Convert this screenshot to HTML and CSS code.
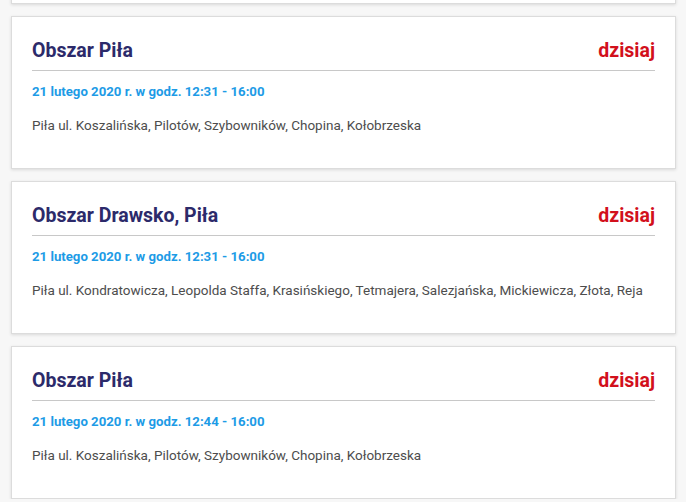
FILE: index.html
```html
<!DOCTYPE html>
<html lang="pl">
<head>
  <meta charset="UTF-8" />
  <meta name="viewport" content="width=device-width, initial-scale=1.0"/>
  <title>Wyłączenia</title>
  <link rel="stylesheet" href="styles.css">
</head>
<body>
  <div class="outages">
    <!-- poprzedni wpis, widoczny tylko dół karty -->
    <div class="outage"></div>

    <div class="outage">
      <div class="outage-head">
        <h2 class="outage-area">Obszar Piła</h2>
        <span class="outage-when">dzisiaj</span>
      </div>
      <div class="outage-date">21 lutego 2020 r. w godz. 12:31 - 16:00</div>
      <div class="outage-streets">Piła ul. Koszalińska, Pilotów, Szybowników, Chopina, Kołobrzeska</div>
    </div>

    <div class="outage">
      <div class="outage-head">
        <h2 class="outage-area">Obszar Drawsko, Piła</h2>
        <span class="outage-when">dzisiaj</span>
      </div>
      <div class="outage-date">21 lutego 2020 r. w godz. 12:31 - 16:00</div>
      <div class="outage-streets">Piła ul. Kondratowicza, Leopolda Staffa, Krasińskiego, Tetmajera, Salezjańska, Mickiewicza, Złota, Reja</div>
    </div>

    <div class="outage">
      <div class="outage-head">
        <h2 class="outage-area">Obszar Piła</h2>
        <span class="outage-when">dzisiaj</span>
      </div>
      <div class="outage-date">21 lutego 2020 r. w godz. 12:44 - 16:00</div>
      <div class="outage-streets">Piła ul. Koszalińska, Pilotów, Szybowników, Chopina, Kołobrzeska</div>
    </div>
  </div>
</body>
</html>
```

FILE: styles.css
```css
body {
  margin: 0;
  font-family: Roboto, "Open Sans", sans-serif;
  background: #f7f7f7;
  overflow: hidden;
}
.outages {
  display: flex;
  flex-direction: column;
  gap: 12px;
  margin-top: -149px;
  padding: 0 10px 0 11px;
}
.outage {
  height: 153px;
  box-sizing: border-box;
  background: #fff;
  border: 1px solid #dcdcdc;
  box-shadow: 0 1px 3px rgba(0,0,0,0.12);
  padding: 21px 20px 0 20px;
}
.outage-head {
  display: flex;
  justify-content: space-between;
  align-items: baseline;
  border-bottom: 1px solid #c8c8c8;
  height: 32px;
}
.outage-area {
  margin: 0;
  font-size: 19.5px;
  line-height: 26px;
  font-weight: 700;
  color: #2c2a6a;
}
.outage-when {
  font-size: 19.5px;
  line-height: 26px;
  font-weight: 700;
  color: #d2101c;
}
.outage-date {
  margin-top: 12px;
  font-size: 13.2px;
  line-height: 17px;
  font-weight: 700;
  color: #1d9be6;
}
.outage-streets {
  margin-top: 16px;
  font-size: 13.5px;
  line-height: 19px;
  color: #4d4d4d;
}
```
